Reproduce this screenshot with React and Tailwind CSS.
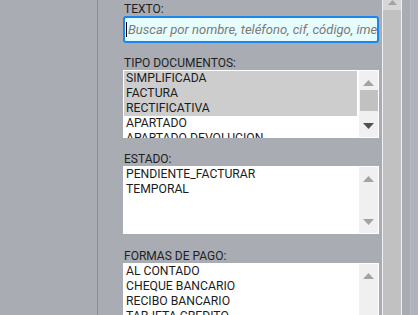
const tipos = ['SIMPLIFICADA', 'FACTURA', 'RECTIFICATIVA', 'APARTADO', 'APARTADO DEVOLUCION'];
const estados = ['PENDIENTE_FACTURAR', 'TEMPORAL'];
const formas = ['AL CONTADO', 'CHEQUE BANCARIO', 'RECIBO BANCARIO', 'TARJETA CREDITO', 'TRANSFERENCIA'];

const UpArrow = ({ dark }) => (
  <svg width="11" height="6" viewBox="0 0 11 6">
    <path d="M0 6 L5.5 0 L11 6 Z" fill={dark ? '#505050' : '#a3a3a3'} />
  </svg>
);

const DownArrow = ({ dark }) => (
  <svg width="11" height="6" viewBox="0 0 11 6">
    <path d="M0 0 L5.5 6 L11 0 Z" fill={dark ? '#505050' : '#a3a3a3'} />
  </svg>
);

const ListBox = ({ items, selected = [], height, thumb }) => (
  <div className={`flex w-[256px] overflow-hidden bg-white p-px ${height}`}>
    <div className="flex-1 pr-[2px]">
      {items.map((it, i) => (
        <div
          key={it}
          className={`h-[15px] whitespace-nowrap pl-[2px] text-[12.2px] leading-[15px] text-[#1c1c1c] ${
            selected.includes(i) ? 'bg-[#cdcdcd]' : ''
          }`}
        >
          {it}
        </div>
      ))}
    </div>
    <div className="flex w-[19px] flex-col items-center bg-[#f0f0f0] pt-[9px] pb-[8px]">
      <UpArrow />
      {thumb ? (
        <>
          <div className="mt-[4px] h-[21px] w-[18px] bg-[#c1c1c1]" />
          <div className="flex-1" />
          <DownArrow dark />
        </>
      ) : (
        <>
          <div className="flex-1" />
          <DownArrow />
        </>
      )}
    </div>
  </div>
);

const Label = ({ children, className = '' }) => (
  <div className={`pl-px text-[12px] leading-[14px] text-[#1f1f1f] ${className}`}>{children}</div>
);

export default function App() {
  return (
    <div
      className="flex h-[315px] w-[418px] overflow-hidden bg-[#a9acb3]"
      style={{ fontFamily: 'Roboto, "Liberation Sans", sans-serif' }}
    >
      <div className="w-[98px] shrink-0 border-r border-[#8b8e94]" />

      <div className="w-[284px] shrink-0 pl-[25px] pr-[3px] pt-[2px]">
        <Label>TEXTO:</Label>
        <div className="flex h-[27px] w-[256px] items-center overflow-hidden rounded-[3px] border-2 border-[#1a86f0] bg-[#e6fcfd] pl-[1px]">
          <div className="h-[15px] w-px shrink-0 bg-black" />
          <span className="ml-px whitespace-nowrap text-[13px] italic text-[#7a7a7a]">
            Buscar por nombre, teléfono, cif, código, imei
          </span>
        </div>

        <Label className="mt-[13px]">TIPO DOCUMENTOS:</Label>
        <ListBox items={tipos} selected={[0, 1, 2]} height="h-[68px]" thumb />

        <Label className="mt-[14px]">ESTADO:</Label>
        <ListBox items={estados} height="h-[68px]" />

        <Label className="mt-[15px]">FORMAS DE PAGO:</Label>
        <ListBox items={formas} height="h-[68px]" />
      </div>

      <div className="flex w-[20px] shrink-0 flex-col border-x border-[#eef0f2] bg-[#c1c1c1]">
        <div className="flex h-[10px] items-start justify-center bg-[#d6d6d6]">
          <svg width="11" height="5" viewBox="0 0 11 5">
            <path d="M1 5 L5.5 0 L10 5 Z" fill="#a3a3a3" />
          </svg>
        </div>
      </div>

      <div className="flex-1 bg-[#a9acb3]">
        <div className="ml-[8px] h-full border-l border-[#b9bcc2] bg-[#b0b3b9]" />
      </div>
    </div>
  );
}
